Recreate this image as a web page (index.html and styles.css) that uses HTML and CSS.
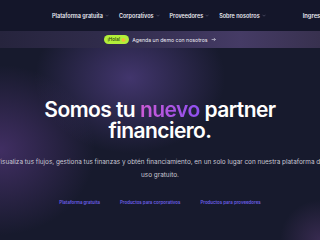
FILE: index.html
```html
<!DOCTYPE html>
<html lang="es">
<head>
<meta charset="utf-8">
<link rel="stylesheet" href="styles.css">
</head>
<body>
<div class="page">
  <header class="nav">
    <div class="nav-item">Plataforma gratuita <svg class="chev" viewBox="0 0 8 5"><path d="M1 1l3 3 3-3" fill="none" stroke="currentColor" stroke-width="1"/></svg></div>
    <div class="nav-item">Corporativos <svg class="chev" viewBox="0 0 8 5"><path d="M1 1l3 3 3-3" fill="none" stroke="currentColor" stroke-width="1"/></svg></div>
    <div class="nav-item">Proveedores <svg class="chev" viewBox="0 0 8 5"><path d="M1 1l3 3 3-3" fill="none" stroke="currentColor" stroke-width="1"/></svg></div>
    <div class="nav-item">Sobre nosotros <svg class="chev" viewBox="0 0 8 5"><path d="M1 1l3 3 3-3" fill="none" stroke="currentColor" stroke-width="1"/></svg></div>
    <div class="nav-item login">Ingresar</div>
  </header>
  <div class="banner">
    <span class="badge">¡Hola! <svg class="hand" viewBox="0 0 10 10"><path d="M3 9c-1.5-1-2.5-3-2-4.5.3-.8 1.2-.5 1.5.2L3 3c-.2-1 .8-1.3 1.2-.5L5 2.5c0-1 1.2-1 1.3 0l.4 1.4c.2-.8 1.2-.8 1.2.1L8.5 6c.3 2-1 3.5-3 3.5C4.5 9.5 3.6 9.4 3 9z" fill="#f6b93b"/></svg></span>
    <span class="banner-text">Agenda un demo con nosotros</span>
    <svg class="arrow" viewBox="0 0 8 8"><path d="M1 4h6M4.5 1.5L7 4 4.5 6.5" fill="none" stroke="currentColor" stroke-width="1"/></svg>
  </div>
  <main class="hero">
    <h1 class="title">Somos tu <span class="accent">nuevo</span> partner<br>financiero.</h1>
    <p class="lead">Visualiza tus flujos, gestiona tus finanzas y obtén financiamiento, en un solo lugar con nuestra plataforma de uso gratuito.</p>
    <nav class="links">
      <a class="link">Plataforma gratuita</a>
      <a class="link">Productos para corporativos</a>
      <a class="link">Productos para proveedores</a>
    </nav>
  </main>
</div>
</body>
</html>
```
FILE: styles.css
```css
html, body {
  margin: 0;
  padding: 0;
  width: 320px;
  height: 240px;
  overflow: hidden;
  background: #161829;
}
.page {
  width: 320px;
  height: 240px;
  overflow: hidden;
  font-family: Inter, "Liberation Sans", sans-serif;
  color: #fff;
  background:
    radial-gradient(ellipse 95px 75px at 130px 78px, rgba(68, 55, 112, 0.95), rgba(68, 55, 112, 0) 100%),
    radial-gradient(ellipse 95px 85px at 0px 150px, rgba(72, 50, 108, 0.85), rgba(72, 50, 108, 0) 100%),
    radial-gradient(ellipse 40px 40px at 320px 240px, rgba(70, 50, 95, 0.7), rgba(70, 50, 95, 0) 100%),
    #171a2d;
}
.nav {
  height: 31px;
  display: flex;
  align-items: center;
  padding-left: 52px;
  gap: 10px;
  white-space: nowrap;
  background: #14162a;
  font-size: 5.5px;
  font-weight: 600;
  color: #e9e9f0;
}
.nav-item {
  display: flex;
  align-items: center;
  gap: 2px;
}
.chev {
  width: 4px;
  height: 3px;
  color: #6e6f86;
}
.login {
  margin-left: 27px;
  font-size: 5.8px;
}
.banner {
  height: 17px;
  display: flex;
  align-items: center;
  justify-content: center;
  gap: 3px;
  background: linear-gradient(90deg, #26243d 0%, #2f2b4a 30%, #3a3358 55%, #453b65 75%, #38314f 100%);
  font-size: 5.2px;
  color: #ecebf3;
}
.badge {
  display: flex;
  align-items: center;
  gap: 1px;
  height: 9px;
  padding: 0 3px;
  border-radius: 5px;
  background: #b3ef3a;
  color: #2a3a10;
  font-size: 4.6px;
  font-weight: 500;
}
.hand {
  width: 5px;
  height: 5px;
}
.arrow {
  width: 5px;
  height: 5px;
  color: #d9d8e6;
}
.hero {
  display: flex;
  flex-direction: column;
  align-items: center;
  padding-top: 51px;
}
.title {
  margin: 0;
  font-size: 21px;
  line-height: 21px;
  font-weight: 600;
  letter-spacing: -0.55px;
  text-align: center;
  white-space: nowrap;
  color: #ffffff;
}
.accent {
  background: linear-gradient(90deg, #cd5bd6, #8d4ff0);
  -webkit-background-clip: text;
  background-clip: text;
  color: transparent;
}
.lead {
  width: 340px;
  margin: 15px 0 0;
  font-size: 6.4px;
  line-height: 13px;
  text-align: center;
  color: #c9c8d4;
}
.links {
  display: flex;
  gap: 20px;
  margin-top: 18px;
}
.link {
  font-size: 4.4px;
  font-weight: 600;
  color: #6c5fe6;
}
```
